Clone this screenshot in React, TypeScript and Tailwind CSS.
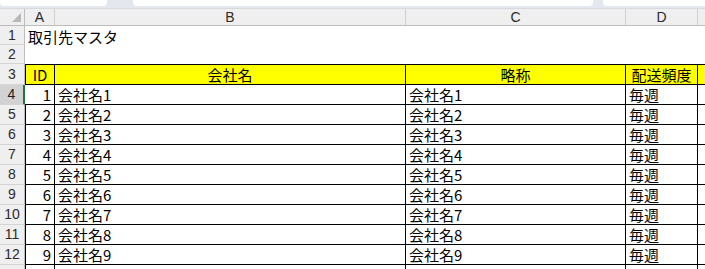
const rows = Array.from({ length: 9 }, (_, i) => ({
  id: i + 1,
  name: `会社名${i + 1}`,
  short: `会社名${i + 1}`,
  freq: '毎週',
}));

const jp = "font-['Noto_Sans_CJK_JP','Noto_Sans',sans-serif]";
const ui = "font-['Liberation_Sans','Noto_Sans',sans-serif]";

function RowHead({ n, h, active }: { n?: number; h: string; active?: boolean }) {
  return (
    <div
      className={`${h} w-[25px] shrink-0 flex items-center justify-center border-b border-[#d4d4d4] text-[14px] ${ui} ${
        active
          ? 'bg-[#d2d2d2] text-[#1e1e1e] border-r-2 border-r-[#217346]'
          : 'bg-[#efefef] text-[#2b2b2b] border-r border-r-[#bdbdbd]'
      }`}
    >
      {n}
    </div>
  );
}

export default function App() {
  return (
    <div className={`w-[705px] h-[269px] overflow-hidden bg-white ${jp} text-black`}>
      {/* formula bar edge */}
      <div className="h-[9px] flex bg-[#e4e8ee] border-b border-[#d6d9de]">
        <div className="w-[107px] h-[6px] bg-white rounded-b-[4px]" />
        <div className="w-[26px]" />
        <div className="w-[460px] h-[6px] bg-white rounded-b-[4px]" />
        <div className="w-[10px]" />
        <div className="flex-1 h-[6px] bg-white rounded-bl-[4px]" />
      </div>

      {/* column headers */}
      <div className={`flex h-[17px] bg-[#efefef] border-b border-[#bdbdbd] text-[14px] text-[#2b2b2b] ${ui}`}>
        <div className="w-[25px] shrink-0 border-r border-[#bdbdbd] flex items-end justify-end pr-[3px] pb-[3px]">
          <div className="w-0 h-0 border-l-[9px] border-l-transparent border-b-[9px] border-b-[#b8b8b8]" />
        </div>
        <div className="w-[30px] shrink-0 border-r border-[#d0d0d0] flex items-center justify-center">A</div>
        <div className="w-[351px] shrink-0 border-r border-[#d0d0d0] flex items-center justify-center">B</div>
        <div className="w-[220px] shrink-0 border-r border-[#d0d0d0] flex items-center justify-center">C</div>
        <div className="w-[72px] shrink-0 border-r border-[#d0d0d0] flex items-center justify-center">D</div>
        <div className="flex-1" />
      </div>

      {/* row 1 */}
      <div className="flex h-[19px]">
        <RowHead n={1} h="h-[19px]" />
        <div className="pl-[3px] pt-[1px] text-[15px] leading-[19px] whitespace-nowrap">取引先マスタ</div>
      </div>

      {/* row 2 */}
      <div className="flex h-[19px]">
        <RowHead n={2} h="h-[19px]" />
      </div>

      {/* row 3 header */}
      <div className="flex h-[21px]">
        <RowHead n={3} h="h-[21px]" />
        <div className="flex flex-1 bg-[#ffff00] border-y border-black text-[15px] leading-[19px]">
          <div className="w-[30px] shrink-0 border-l border-r border-black text-center">ID</div>
          <div className="w-[351px] shrink-0 border-r border-black text-center">会社名</div>
          <div className="w-[220px] shrink-0 border-r border-black text-center">略称</div>
          <div className="w-[72px] shrink-0 border-r border-black text-center">配送頻度</div>
          <div className="flex-1" />
        </div>
      </div>

      {/* data rows */}
      {rows.map((r, i) => (
        <div key={r.id} className="flex h-[20px]">
          <RowHead n={r.id + 3} h="h-[20px]" active={i === 0} />
          <div className="flex flex-1 border-b border-black text-[15px] leading-[19px] whitespace-nowrap">
            <div className={`w-[30px] shrink-0 border-r border-black text-right pr-[3px] ${i === 0 ? 'w-[29px]' : 'border-l'}`}>{r.id}</div>
            <div className="w-[351px] shrink-0 border-r border-black pl-[3px]">{r.name}</div>
            <div className="w-[220px] shrink-0 border-r border-black pl-[3px]">{r.short}</div>
            <div className="w-[72px] shrink-0 border-r border-black pl-[3px]">{r.freq}</div>
            <div className="flex-1" />
          </div>
        </div>
      ))}

      {/* row 13 (cut off) */}
      <div className="flex h-[20px]">
        <RowHead h="h-[20px]" />
        <div className="flex flex-1">
          <div className="w-[30px] shrink-0 border-l border-r border-black" />
          <div className="w-[351px] shrink-0 border-r border-black" />
          <div className="w-[220px] shrink-0 border-r border-black" />
          <div className="w-[72px] shrink-0 border-r border-black" />
        </div>
      </div>
    </div>
  );
}
